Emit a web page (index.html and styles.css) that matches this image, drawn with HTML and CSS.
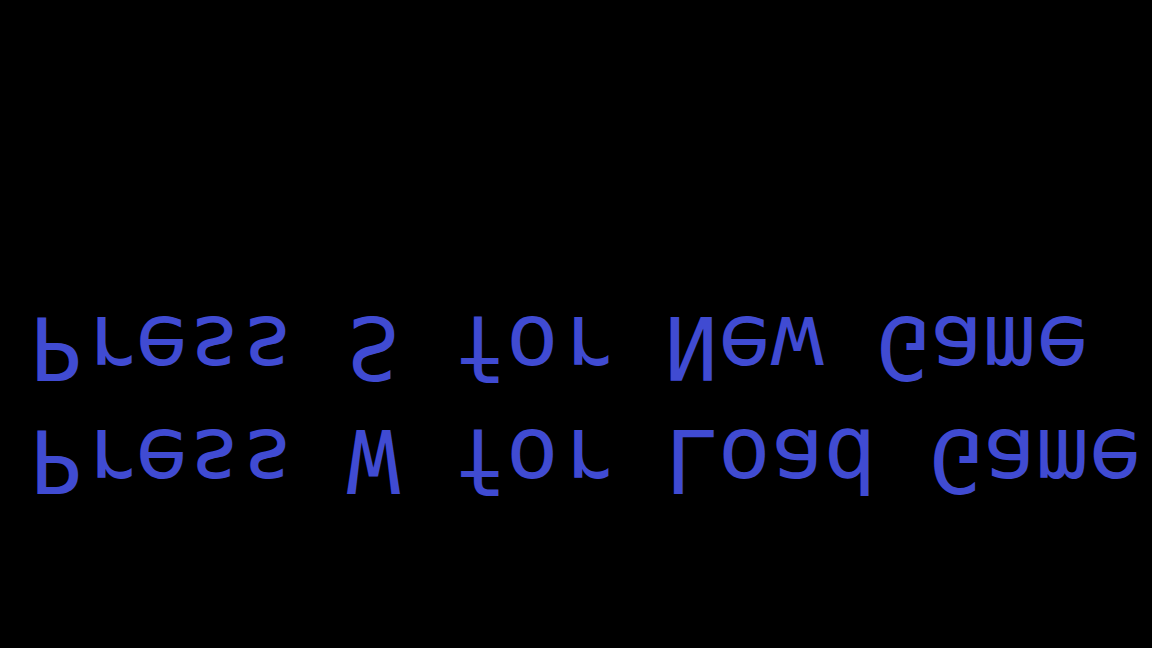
FILE: index.html
```html
<!DOCTYPE html>
<html>
<head>
<meta charset="utf-8">
<link rel="stylesheet" href="styles.css">
</head>
<body>
<main class="screen">
  <div class="menu">
    <div class="line">Press S for New Game</div>
    <div class="line">Press W for Load Game</div>
  </div>
</main>
</body>
</html>
```

FILE: styles.css
```css
html, body {
  margin: 0;
  padding: 0;
  background: #000;
  width: 1152px;
  height: 648px;
  overflow: hidden;
}
.screen {
  width: 1152px;
  height: 648px;
  display: flex;
  flex-direction: column;
}
.menu {
  padding-top: 291px;
  padding-left: 29px;
  display: flex;
  flex-direction: column;
}
.line {
  font-family: "DejaVu Sans Mono", monospace;
  font-size: 88px;
  line-height: 113px;
  color: #404bd2;
  white-space: pre;
  transform: scaleY(-1);
}
```
